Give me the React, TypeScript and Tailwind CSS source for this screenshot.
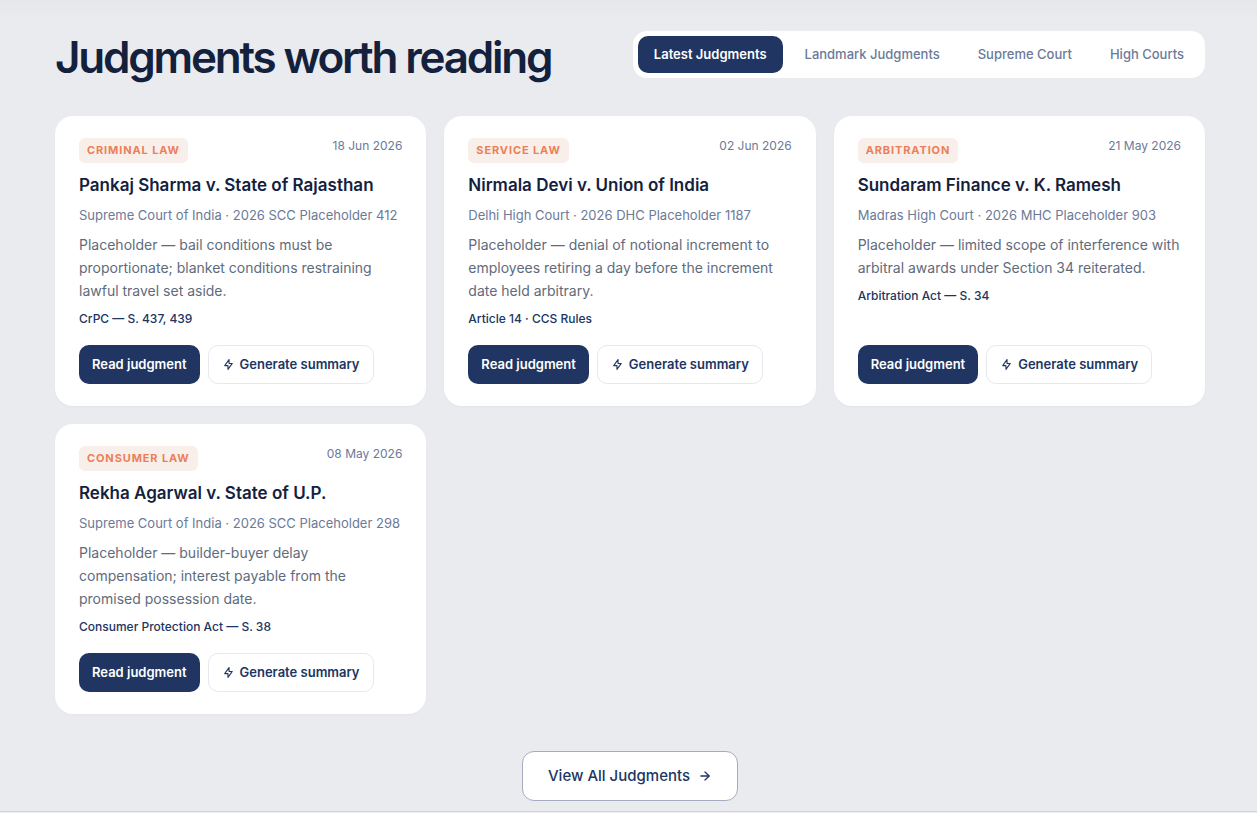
import { useState } from "react";
import { ArrowRight } from "lucide-react";
import { TbBolt } from "react-icons/tb";

type Judgment = {
  area: string;
  date: string;
  title: string;
  citation: string;
  summary: string;
  statute: string;
};

const tabs = ["Latest Judgments", "Landmark Judgments", "Supreme Court", "High Courts"];

const judgments: Judgment[] = [
  {
    area: "Criminal Law",
    date: "18 Jun 2026",
    title: "Pankaj Sharma v. State of Rajasthan",
    citation: "Supreme Court of India · 2026 SCC Placeholder 412",
    summary:
      "Placeholder — bail conditions must be proportionate; blanket conditions restraining lawful travel set aside.",
    statute: "CrPC — S. 437, 439",
  },
  {
    area: "Service Law",
    date: "02 Jun 2026",
    title: "Nirmala Devi v. Union of India",
    citation: "Delhi High Court · 2026 DHC Placeholder 1187",
    summary:
      "Placeholder — denial of notional increment to employees retiring a day before the increment date held arbitrary.",
    statute: "Article 14 · CCS Rules",
  },
  {
    area: "Arbitration",
    date: "21 May 2026",
    title: "Sundaram Finance v. K. Ramesh",
    citation: "Madras High Court · 2026 MHC Placeholder 903",
    summary:
      "Placeholder — limited scope of interference with arbitral awards under Section 34 reiterated.",
    statute: "Arbitration Act — S. 34",
  },
  {
    area: "Consumer Law",
    date: "08 May 2026",
    title: "Rekha Agarwal v. State of U.P.",
    citation: "Supreme Court of India · 2026 SCC Placeholder 298",
    summary:
      "Placeholder — builder-buyer delay compensation; interest payable from the promised possession date.",
    statute: "Consumer Protection Act — S. 38",
  },
];

function JudgmentCard({ item }: { item: Judgment }) {
  return (
    <article className="flex flex-col rounded-[18px] bg-white px-6 py-[22px] shadow-[0_1px_2px_rgba(20,33,61,0.03)]">
      <div className="flex items-start justify-between">
        <span className="rounded-md bg-[#f8eeea] px-2 text-[11px] font-bold uppercase leading-[25px] tracking-[0.08em] text-[#ec7f58]">
          {item.area}
        </span>
        <time className="text-[12px] leading-4 text-[#6b7a99]">{item.date}</time>
      </div>
      <h3 className="mt-[10px] text-[17px] font-semibold leading-6 text-[#14213d]">
        {item.title}
      </h3>
      <p className="mt-2 text-[13px] leading-5 text-[#6b7a99]">{item.citation}</p>
      <p className="mt-2 text-[14px] leading-[23px] text-[#5f6b7c]">{item.summary}</p>
      <p className="mt-[9px] text-[12px] font-medium leading-4 text-[#203562]">{item.statute}</p>
      <div className="mt-auto flex gap-2 pt-[18px]">
        <button
          type="button"
          className="h-[39px] rounded-[10px] bg-[#203562] px-[13px] text-[13px] font-semibold text-white"
        >
          Read judgment
        </button>
        <button
          type="button"
          className="flex h-[39px] items-center gap-[5px] rounded-[10px] border border-[#e5e8ee] bg-white px-[13px] text-[13px] font-semibold text-[#203562]"
        >
          <TbBolt size={13} />
          Generate summary
        </button>
      </div>
    </article>
  );
}

export default function App() {
  const [active, setActive] = useState(tabs[0]);

  return (
    <main className="min-h-screen bg-[#e9ebef] font-['Inter',sans-serif]">
      <section className="border-b border-[#d3d5d8] bg-linear-to-b from-[#e5e7eb] to-[#e9ebef] to-[20px] pt-[31px] pr-[52px] pb-[10px] pl-[55px]">
        <header className="flex flex-wrap items-center justify-between gap-4">
          <h2 className="text-[44px] font-semibold leading-[50px] tracking-tighter text-[#14213d]">
            Judgments worth reading
          </h2>
          <div role="tablist" className="mb-1 flex gap-[6px] rounded-[14px] bg-white p-[5px]">
            {tabs.map((tab) => (
              <button
                key={tab}
                type="button"
                role="tab"
                aria-selected={tab === active}
                onClick={() => setActive(tab)}
                className={
                  tab === active
                    ? "h-[37px] rounded-[10px] bg-[#203562] px-4 text-[13px] font-semibold text-white"
                    : "h-[37px] rounded-[10px] px-4 text-[13px] font-medium text-[#6b7a99]"
                }
              >
                {tab}
              </button>
            ))}
          </div>
        </header>
        <div className="mt-[34px] grid grid-cols-1 gap-[18px] md:grid-cols-2 lg:grid-cols-3">
          {judgments.map((item) => (
            <JudgmentCard key={item.title} item={item} />
          ))}
        </div>
        <div className="mt-[37px] flex justify-center">
          <a
            href="#all"
            className="flex h-[50px] items-center gap-2 rounded-xl border border-[#a5abc0] bg-white px-[25px] text-[15px] font-medium text-[#203562]"
          >
            View All Judgments
            <ArrowRight size={14} strokeWidth={2.25} />
          </a>
        </div>
      </section>
    </main>
  );
}
